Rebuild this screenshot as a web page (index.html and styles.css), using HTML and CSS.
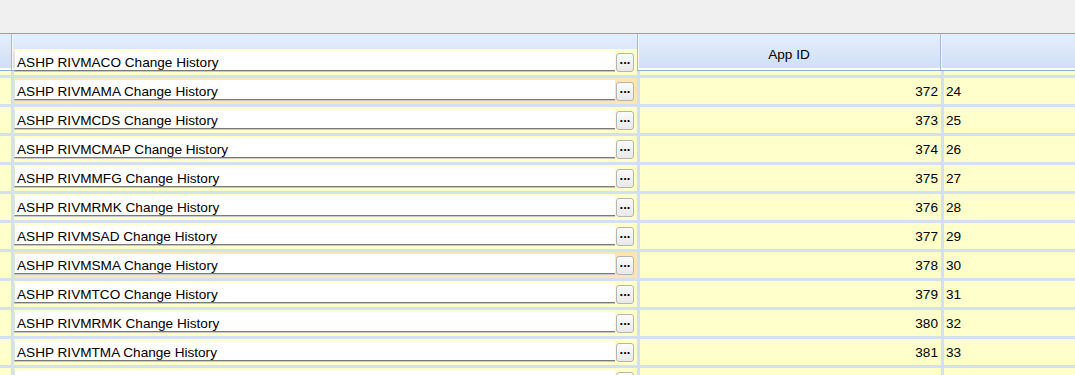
FILE: index.html
```html
<!DOCTYPE html>
<html lang="en">

<head>
    <meta charset="UTF-8">
    <meta name="viewport" content="width=device-width, initial-scale=1.0">
    <title>Applications</title>
    <link rel="stylesheet" href="styles.css">
</head>

<body>
    <div class="toolbar"></div>

    <div class="grid">
        <div class="grid-head">
            <div class="head-cell sel"></div>
            <div class="head-cell">App Name</div>
            <div class="head-cell">App ID</div>
            <div class="head-cell"></div>
        </div>

        <div class="grid-body">
            <div class="row editing">
                <div class="cell sel"></div>
                <div class="cell name"><div class="textbox">ASHP RIVMACO Change History</div><span class="dots">...</span></div>
                <div class="cell num">371</div>
                <div class="cell">23</div>
            </div>
            <div class="row marked">
                <div class="cell sel"></div>
                <div class="cell name"><div class="textbox">ASHP RIVMAMA Change History</div><span class="dots">...</span></div>
                <div class="cell num">372</div>
                <div class="cell">24</div>
            </div>
            <div class="row">
                <div class="cell sel"></div>
                <div class="cell name"><div class="textbox">ASHP RIVMCDS Change History</div><span class="dots">...</span></div>
                <div class="cell num">373</div>
                <div class="cell">25</div>
            </div>
            <div class="row">
                <div class="cell sel"></div>
                <div class="cell name"><div class="textbox">ASHP RIVMCMAP Change History</div><span class="dots">...</span></div>
                <div class="cell num">374</div>
                <div class="cell">26</div>
            </div>
            <div class="row">
                <div class="cell sel"></div>
                <div class="cell name"><div class="textbox">ASHP RIVMMFG Change History</div><span class="dots">...</span></div>
                <div class="cell num">375</div>
                <div class="cell">27</div>
            </div>
            <div class="row">
                <div class="cell sel"></div>
                <div class="cell name"><div class="textbox">ASHP RIVMRMK Change History</div><span class="dots">...</span></div>
                <div class="cell num">376</div>
                <div class="cell">28</div>
            </div>
            <div class="row">
                <div class="cell sel"></div>
                <div class="cell name"><div class="textbox">ASHP RIVMSAD Change History</div><span class="dots">...</span></div>
                <div class="cell num">377</div>
                <div class="cell">29</div>
            </div>
            <div class="row marked">
                <div class="cell sel"></div>
                <div class="cell name"><div class="textbox">ASHP RIVMSMA Change History</div><span class="dots">...</span></div>
                <div class="cell num">378</div>
                <div class="cell">30</div>
            </div>
            <div class="row">
                <div class="cell sel"></div>
                <div class="cell name"><div class="textbox">ASHP RIVMTCO Change History</div><span class="dots">...</span></div>
                <div class="cell num">379</div>
                <div class="cell">31</div>
            </div>
            <div class="row">
                <div class="cell sel"></div>
                <div class="cell name"><div class="textbox">ASHP RIVMRMK Change History</div><span class="dots">...</span></div>
                <div class="cell num">380</div>
                <div class="cell">32</div>
            </div>
            <div class="row">
                <div class="cell sel"></div>
                <div class="cell name"><div class="textbox">ASHP RIVMTMA Change History</div><span class="dots">...</span></div>
                <div class="cell num">381</div>
                <div class="cell">33</div>
            </div>
            <div class="row">
                <div class="cell sel"></div>
                <div class="cell name"><div class="textbox"></div><span class="dots"></span></div>
                <div class="cell num"></div>
                <div class="cell"></div>
            </div>
        </div>
    </div>
</body>

</html>
```

FILE: styles.css
```css
html,
body {
    margin: 0;
    height: 375px;
    overflow: hidden;
}

body {
    font-family: "Liberation Sans", Arial, sans-serif;
    font-size: 13.6px;
    color: #000;
    background-color: #f0f0f0;
}

.toolbar {
    height: 33px;
}

.grid {
    height: 342px;
    overflow: hidden;
    background-color: #d3e0f2;
}

.grid-head {
    position: relative;
    z-index: 1;
    display: grid;
    grid-template-columns: 12px 626px 303px 1fr;
    height: 36px;
    border-top: 1px solid #7fa4d5;
    border-bottom: 1px solid #8eadd8;
    background: linear-gradient(#e6eefb, #cddff6);
    box-shadow: inset 0 -2px 0 #fff;
}

.head-cell {
    display: flex;
    align-items: center;
    justify-content: center;
    border-right: 1px solid #9fbadf;
    box-shadow: inset 1px 0 0 #f4f8fd;
    padding-top: 4px;
}

.head-cell.sel {
    box-shadow: none;
}

.head-cell:last-child {
    border-right: none;
}

.grid-body {
    margin-top: -22px;
    display: flex;
    flex-direction: column;
    gap: 3px;
}

.row {
    display: grid;
    grid-template-columns: 11px 623px 301px 1fr;
    column-gap: 3px;
    height: 26px;
    flex-shrink: 0;
}

.cell {
    display: flex;
    align-items: center;
    background-color: #ffffcc;
    padding: 1px 2px 0;
    white-space: nowrap;
    overflow: hidden;
}

.cell.sel {
    padding: 0;
}

.cell.num {
    justify-content: flex-end;
    padding-right: 3px;
}

.cell.name {
    align-items: flex-start;
    padding: 2px 3px 0 0;
}

.row.editing .cell.name {
    position: relative;
    z-index: 2;
}

.row.marked .cell.name {
    background-color: #ffe5b4;
}

.textbox {
    flex: 1;
    height: 16px;
    padding: 3px 0 0 2px;
    line-height: 17px;
    background-color: #fff;
    border-left: 1px solid #e2e2e2;
    border-bottom: 1px solid #7a7a7a;
    box-shadow: 0 1px 0 #c9c9c9;
    overflow: hidden;
}

.dots {
    width: 16px;
    height: 17px;
    margin: 2px 0 0 1px;
    border: 1px solid #b4b4b4;
    border-radius: 3px;
    background: linear-gradient(#fbfbfb, #e9e9e9);
    font-size: 13px;
    font-weight: bold;
    line-height: 11px;
    text-align: center;
    letter-spacing: 0;
}
```
